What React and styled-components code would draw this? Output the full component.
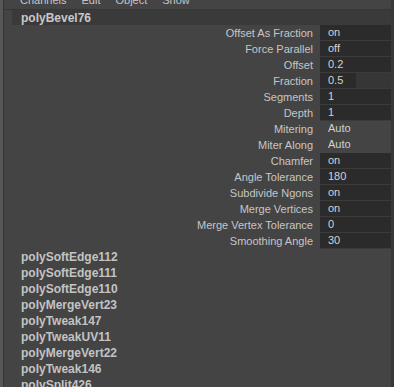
import styled, { createGlobalStyle } from "styled-components";

const Global = createGlobalStyle`
  html, body {
    margin: 0;
    padding: 0;
    background: #444444;
    overflow: hidden;
  }
  body {
    font-family: "Liberation Sans", Arial, sans-serif;
    font-size: 11px;
    color: #c8c8c8;
  }
`;

const Frame = styled.div`
  display: flex;
  width: 394px;
  height: 387px;
  overflow: hidden;
`;

const LeftStrip = styled.div`
  width: 3px;
  background: #575757;
  border-right: 1px solid #353535;
  flex-shrink: 0;
`;

const Main = styled.div`
  flex: 1;
  display: flex;
  flex-direction: column;
  border-right: 3px solid #383838;
  overflow: hidden;
`;

const MenuBar = styled.div`
  height: 9px;
  flex-shrink: 0;
  display: flex;
  align-items: flex-end;
  gap: 15px;
  padding-left: 16px;
  overflow: hidden;
  border-bottom: 1px solid #363636;
`;

const MenuItem = styled.span`
  line-height: 13px;
  margin-bottom: 2px;
  font-size: 11px;
  color: #c4c4c4;
  flex-shrink: 0;
`;

const NodeHeader = styled.div`
  flex-shrink: 0;
  margin-left: 8px;
  height: 15px;
  display: flex;
  align-items: center;
  padding-left: 9px;
  background: #3a3a3a;
  font-weight: bold;
  font-size: 12px;
  color: #c8c8c8;
`;

const Attrs = styled.div`
  flex-shrink: 0;
  display: flex;
  flex-direction: column;
`;

const Row = styled.div`
  display: grid;
  grid-template-columns: 309px 71px;
  column-gap: 7px;
  height: 16px;
  align-items: stretch;
`;

const Label = styled.div`
  text-align: right;
  line-height: 16px;
  color: #c6c6c6;
  white-space: nowrap;
`;

const Field = styled.div`
  position: relative;
  background: ${(p) => (p.$plain ? "transparent" : "#2b2b2b")};
  border-bottom: 1px solid ${(p) => (p.$plain ? "transparent" : "#3b3b3b")};
  line-height: 15px;
  padding-left: 8px;
  color: #d2d2d2;
  white-space: nowrap;
  overflow: hidden;
`;

const SliderRest = styled.div`
  position: absolute;
  top: 0;
  bottom: 0;
  left: 36px;
  right: 0;
  background: #363636;
`;

const FieldText = styled.span`
  position: relative;
`;

const NodeList = styled.div`
  flex-shrink: 0;
  display: flex;
  flex-direction: column;
  padding-left: 17px;
`;

const NodeItem = styled.div`
  height: 16px;
  line-height: 16px;
  font-weight: bold;
  font-size: 12px;
  color: #c3c3c3;
  white-space: nowrap;
`;

const attrs = [
  { label: "Offset As Fraction", value: "on" },
  { label: "Force Parallel", value: "off" },
  { label: "Offset", value: "0.2" },
  { label: "Fraction", value: "0.5", slider: true },
  { label: "Segments", value: "1" },
  { label: "Depth", value: "1" },
  { label: "Mitering", value: "Auto", plain: true },
  { label: "Miter Along", value: "Auto", plain: true },
  { label: "Chamfer", value: "on" },
  { label: "Angle Tolerance", value: "180" },
  { label: "Subdivide Ngons", value: "on" },
  { label: "Merge Vertices", value: "on" },
  { label: "Merge Vertex Tolerance", value: "0" },
  { label: "Smoothing Angle", value: "30" },
];

const nodes = [
  "polySoftEdge112",
  "polySoftEdge111",
  "polySoftEdge110",
  "polyMergeVert23",
  "polyTweak147",
  "polyTweakUV11",
  "polyMergeVert22",
  "polyTweak146",
  "polySplit426",
];

export default function App() {
  return (
    <>
      <Global />
      <Frame>
        <LeftStrip />
        <Main>
          <MenuBar>
            <MenuItem>Channels</MenuItem>
            <MenuItem>Edit</MenuItem>
            <MenuItem>Object</MenuItem>
            <MenuItem>Show</MenuItem>
          </MenuBar>
          <NodeHeader>polyBevel76</NodeHeader>
          <Attrs>
            {attrs.map((a) => (
              <Row key={a.label}>
                <Label>{a.label}</Label>
                <Field $plain={a.plain}>
                  {a.slider && <SliderRest />}
                  <FieldText>{a.value}</FieldText>
                </Field>
              </Row>
            ))}
          </Attrs>
          <NodeList>
            {nodes.map((n) => (
              <NodeItem key={n}>{n}</NodeItem>
            ))}
          </NodeList>
        </Main>
      </Frame>
    </>
  );
}
